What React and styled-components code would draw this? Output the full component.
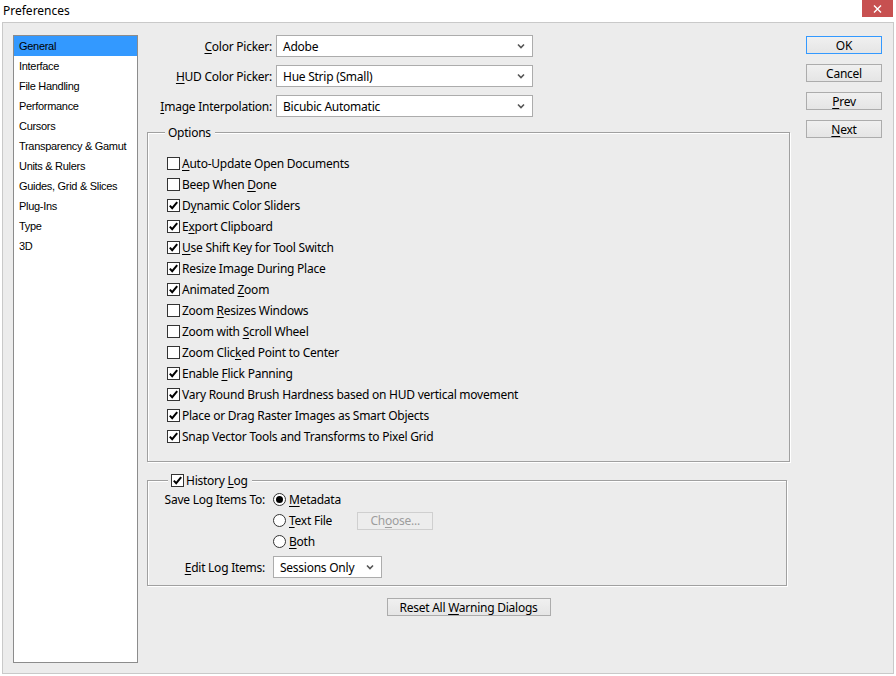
import React from "react";
import styled, { createGlobalStyle } from "styled-components";

const GlobalStyle = createGlobalStyle`
  html, body {
    margin: 0;
    padding: 0;
    background: #fff;
  }
  body {
    font-family: "Noto Sans", "Liberation Sans", sans-serif;
    font-size: 12px;
    letter-spacing: -0.25px;
    color: #000;
  }
`;

const Window = styled.div`
  width: 896px;
  height: 676px;
  display: flex;
  flex-direction: column;
  background: #fff;
`;

const TitleBar = styled.div`
  height: 22px;
  display: flex;
  justify-content: space-between;
  align-items: flex-start;
`;

const Title = styled.div`
  padding-left: 3px;
  line-height: 22px;
  font-size: 12px;
  letter-spacing: 0;
  color: #000;
`;

const CloseButton = styled.div`
  width: 31px;
  height: 17px;
  margin-right: 3px;
  background: #c75050;
  display: flex;
  align-items: center;
  justify-content: center;
`;

const Body = styled.div`
  margin: 0 2px;
  height: 652px;
  box-sizing: border-box;
  border: 1px solid #c9c9c9;
  background: #ececec;
  display: flex;
  align-items: flex-start;
  padding: 12px 0 0 10px;
`;

const Sidebar = styled.ul`
  list-style: none;
  margin: 0;
  padding: 0;
  width: 125px;
  height: 628px;
  box-sizing: border-box;
  border: 1px solid #8c8c8c;
  background: #fff;
  font-family: "Liberation Sans", sans-serif;
  font-size: 11px;
  letter-spacing: -0.3px;
`;

const SideItem = styled.li`
  height: 20px;
  line-height: 20px;
  padding-left: 5px;
  background: ${(p) => (p.$active ? "#3399ff" : "transparent")};
  white-space: nowrap;
`;

const Main = styled.div`
  width: 643px;
  margin-left: 9px;
  display: flex;
  flex-direction: column;
`;

const FormGrid = styled.div`
  display: grid;
  grid-template-columns: 125px 257px;
  column-gap: 4px;
  row-gap: 8px;
  align-items: center;
`;

const FieldLabel = styled.label`
  text-align: right;
  white-space: nowrap;
`;

const SelectBox = styled.div`
  height: 22px;
  width: ${(p) => p.$width || "257px"};
  box-sizing: border-box;
  border: 1px solid #acacac;
  background: #fff;
  display: flex;
  align-items: center;
  justify-content: space-between;
  padding: 0 7px 0 6px;
`;

const Key = styled.span`
  text-decoration: underline;
  text-underline-offset: 2px;
`;

const GroupBox = styled.div`
  position: relative;
  border: 1px solid #a0a0a0;
  box-shadow: 1px 1px 0 #fff, inset 1px 1px 0 #fff;
  box-sizing: border-box;
  width: ${(p) => p.$width};
  height: ${(p) => p.$height};
  margin-top: ${(p) => p.$top};
  padding: ${(p) => p.$pad};
`;

const Legend = styled.div`
  position: absolute;
  top: -9px;
  left: ${(p) => p.$left};
  height: 17px;
  padding: 0 4px 0 3px;
  background: #ececec;
  display: flex;
  align-items: center;
  gap: 2px;
  white-space: nowrap;
`;

const CheckRow = styled.div`
  height: 21px;
  display: flex;
  align-items: center;
  gap: 2px;
  white-space: nowrap;
`;

const Box = styled.span`
  width: 13px;
  height: 13px;
  box-sizing: border-box;
  border: 1px solid #333;
  background: #fff;
  display: inline-flex;
  align-items: center;
  justify-content: center;
  flex: none;
`;

const Radio = styled.span`
  width: 13px;
  height: 13px;
  box-sizing: border-box;
  border: 1px solid #333;
  border-radius: 50%;
  background: #fff;
  display: inline-flex;
  align-items: center;
  justify-content: center;
  flex: none;
  &::after {
    content: "";
    width: 7px;
    height: 7px;
    border-radius: 50%;
    background: ${(p) => (p.$on ? "#000" : "transparent")};
  }
`;

const LogGrid = styled.div`
  display: grid;
  grid-template-columns: 108px auto;
  column-gap: 8px;
  align-items: center;
`;

const LogLabel = styled.div`
  text-align: right;
  white-space: nowrap;
  height: 21px;
  line-height: 21px;
  margin-top: ${(p) => p.$top || 0};
`;

const RadioRow = styled.div`
  height: 21px;
  display: flex;
  align-items: center;
  gap: 3px;
  white-space: nowrap;
`;

const EditCell = styled.div`
  margin-top: 4px;
`;

const Button = styled.div`
  width: ${(p) => p.$width || "76px"};
  height: 18px;
  box-sizing: border-box;
  margin-left: ${(p) => p.$offset || 0};
  border: 1px solid ${(p) => (p.$default ? "#3399ff" : p.$disabled ? "#cfcfcf" : "#acacac")};
  background: ${(p) => (p.$disabled ? "#ededed" : "linear-gradient(#f0f0f0, #e5e5e5)")};
  color: ${(p) => (p.$disabled ? "#9d9d9d" : "#000")};
  display: flex;
  align-items: center;
  justify-content: center;
  white-space: nowrap;
  flex: none;
`;

const ResetRow = styled.div`
  display: flex;
  justify-content: center;
  margin-top: 12px;
`;

const Actions = styled.div`
  display: flex;
  flex-direction: column;
  gap: 10px;
  margin-left: 16px;
  margin-top: 1px;
`;

const sections = [
  "General",
  "Interface",
  "File Handling",
  "Performance",
  "Cursors",
  "Transparency & Gamut",
  "Units & Rulers",
  "Guides, Grid & Slices",
  "Plug-Ins",
  "Type",
  "3D",
];

const options = [
  ["Auto-Update Open Documents", 0, false],
  ["Beep When Done", 10, false],
  ["Dynamic Color Sliders", 1, true],
  ["Export Clipboard", 1, true],
  ["Use Shift Key for Tool Switch", 0, true],
  ["Resize Image During Place", 10, true],
  ["Animated Zoom", 9, true],
  ["Zoom Resizes Windows", 5, false],
  ["Zoom with Scroll Wheel", 10, false],
  ["Zoom Clicked Point to Center", 9, false],
  ["Enable Flick Panning", 7, true],
  ["Vary Round Brush Hardness based on HUD vertical movement", -1, true],
  ["Place or Drag Raster Images as Smart Objects", -1, true],
  ["Snap Vector Tools and Transforms to Pixel Grid", -1, true],
];

// underline the access key at index `at`
function Accel({ text, at }) {
  if (at < 0) return <span>{text}</span>;
  return (
    <span>
      {text.slice(0, at)}
      <Key>{text[at]}</Key>
      {text.slice(at + 1)}
    </span>
  );
}

function Chevron() {
  return (
    <svg width="8" height="6" viewBox="0 0 8 6">
      <path d="M1 1.5 L4 4.5 L7 1.5" fill="none" stroke="#555" strokeWidth="1.6" />
    </svg>
  );
}

function Check({ on }) {
  return (
    <Box>
      {on && (
        <svg width="11" height="11" viewBox="0 0 11 11">
          <path d="M1.8 5.6 L4.2 8.2 L9.2 2.2" fill="none" stroke="#000" strokeWidth="2" />
        </svg>
      )}
    </Box>
  );
}

function Select({ label, value, width }) {
  return (
    <>
      {label && <FieldLabel>{label}</FieldLabel>}
      <SelectBox $width={width}>
        <span>{value}</span>
        <Chevron />
      </SelectBox>
    </>
  );
}

export default function App() {
  return (
    <Window>
      <GlobalStyle />
      <TitleBar>
        <Title>Preferences</Title>
        <CloseButton>
          <svg width="9" height="8" viewBox="0 0 9 8">
            <path d="M1 0.5 L8 7.5 M8 0.5 L1 7.5" stroke="#fff" strokeWidth="1.4" />
          </svg>
        </CloseButton>
      </TitleBar>
      <Body>
        <Sidebar>
          {sections.map((s, i) => (
            <SideItem key={s} $active={i === 0}>
              {s}
            </SideItem>
          ))}
        </Sidebar>

        <Main>
          <FormGrid>
            <Select label={<Accel text="Color Picker:" at={0} />} value="Adobe" />
            <Select label={<Accel text="HUD Color Picker:" at={0} />} value="Hue Strip (Small)" />
            <Select label={<Accel text="Image Interpolation:" at={0} />} value="Bicubic Automatic" />
          </FormGrid>

          <GroupBox $width="643px" $height="330px" $top="15px" $pad="20px 0 0 19px">
            <Legend $left="17px">Options</Legend>
            {options.map(([text, at, on]) => (
              <CheckRow key={text}>
                <Check on={on} />
                <Accel text={text} at={at} />
              </CheckRow>
            ))}
          </GroupBox>

          <GroupBox $width="640px" $height="106px" $top="18px" $pad="8px 0 0 9px">
            <Legend $left="20px">
              <Check on />
              <Accel text="History Log" at={8} />
            </Legend>
            <LogGrid>
              <LogLabel>Save Log Items To:</LogLabel>
              <RadioRow>
                <Radio $on />
                <Accel text="Metadata" at={0} />
              </RadioRow>
              <span />
              <RadioRow>
                <Radio />
                <Accel text="Text File" at={0} />
                <Button $disabled $width="76px" $offset="22px">
                  <Accel text="Choose..." at={2} />
                </Button>
              </RadioRow>
              <span />
              <RadioRow>
                <Radio />
                <Accel text="Both" at={0} />
              </RadioRow>
              <LogLabel $top="4px">
                <Accel text="Edit Log Items:" at={0} />
              </LogLabel>
              <EditCell>
                <SelectBox $width="109px">
                  <span>Sessions Only</span>
                  <Chevron />
                </SelectBox>
              </EditCell>
            </LogGrid>
          </GroupBox>

          <ResetRow>
            <Button $width="164px">
              <Accel text="Reset All Warning Dialogs" at={10} />
            </Button>
          </ResetRow>
        </Main>

        <Actions>
          <Button $default>OK</Button>
          <Button>Cancel</Button>
          <Button>
            <Accel text="Prev" at={0} />
          </Button>
          <Button>
            <Accel text="Next" at={0} />
          </Button>
        </Actions>
      </Body>
    </Window>
  );
}
